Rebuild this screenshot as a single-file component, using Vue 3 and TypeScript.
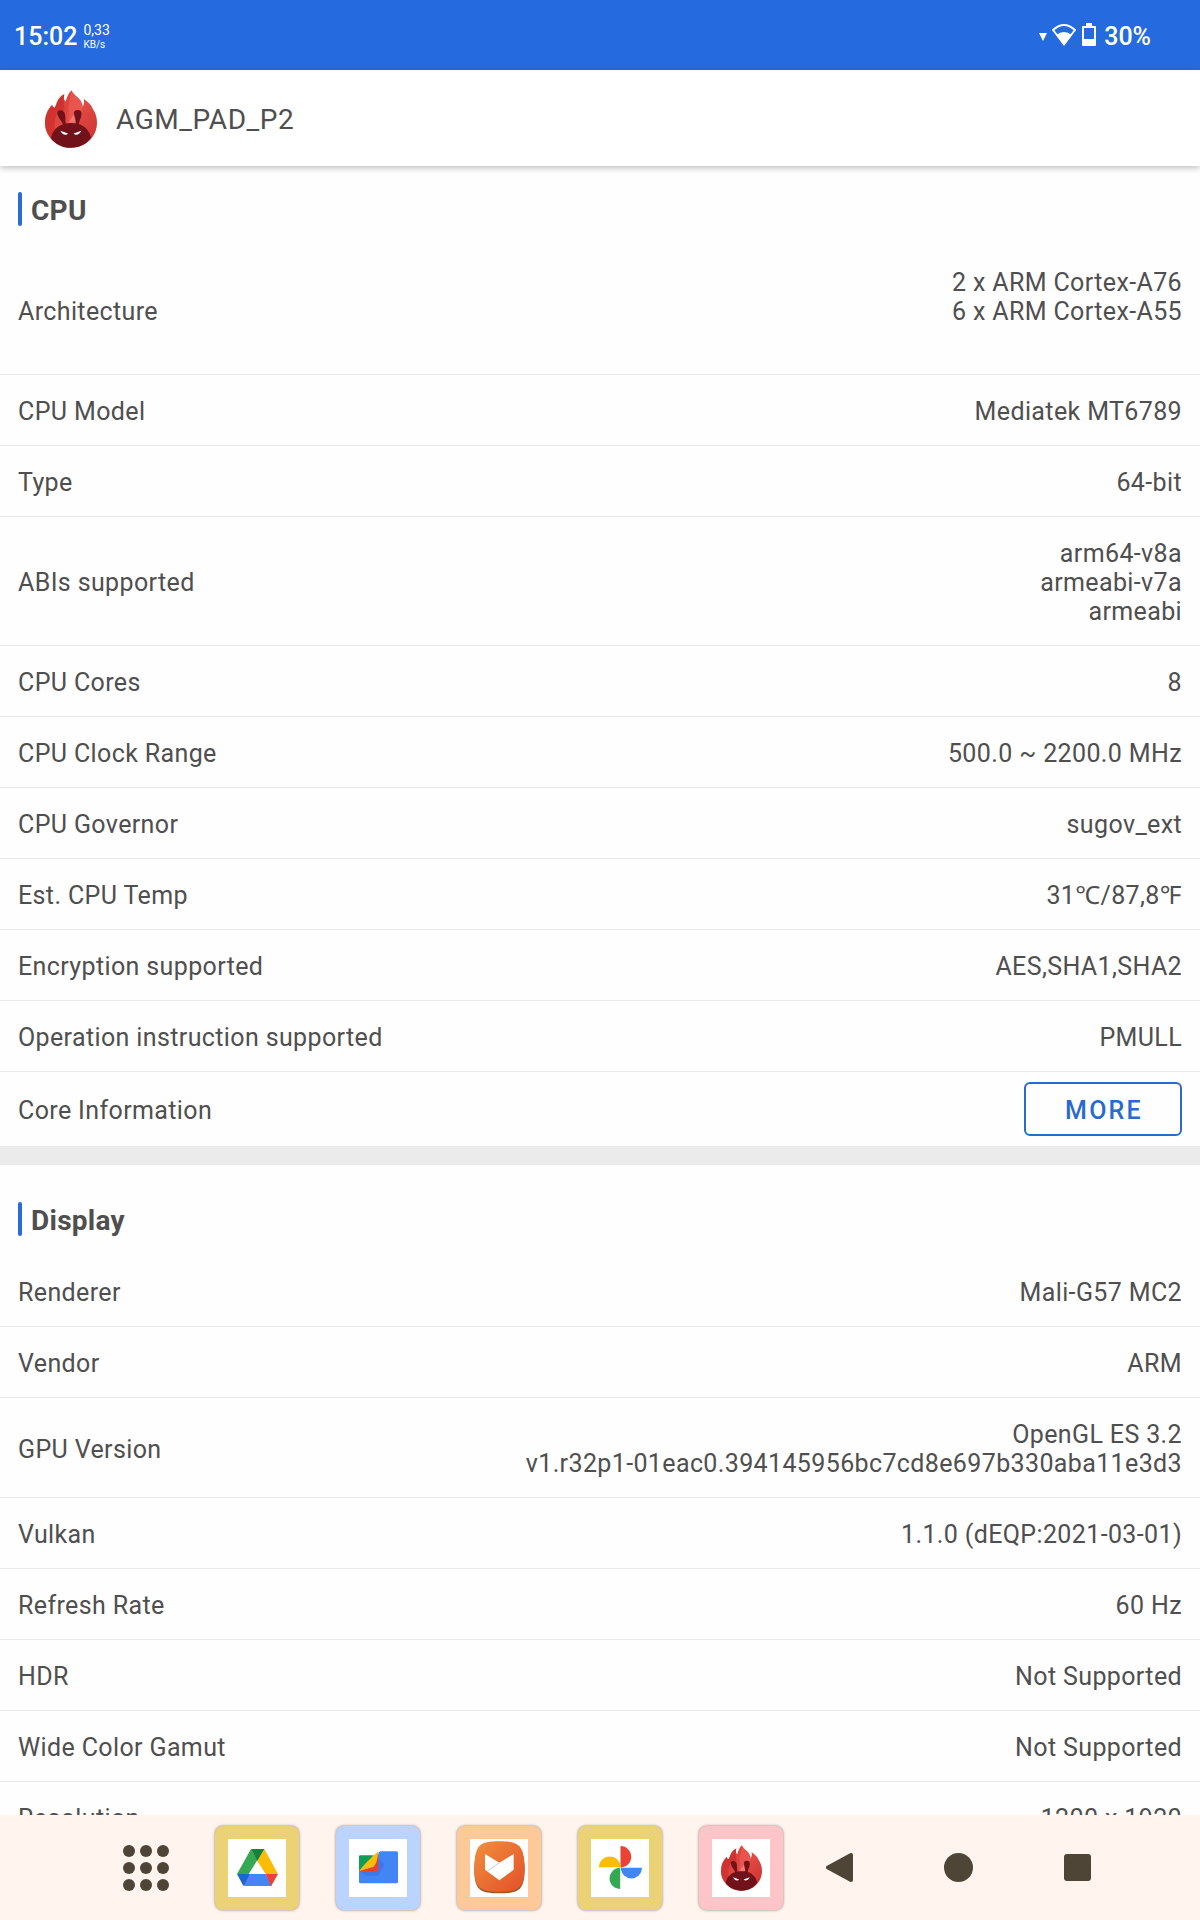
<script setup lang="ts">
interface Row {
  label: string
  value: string
}

const cpuRows: Row[] = [
  { label: 'Architecture', value: '2 x ARM Cortex-A76\n6 x ARM Cortex-A55\n\u00a0' },
  { label: 'CPU Model', value: 'Mediatek MT6789' },
  { label: 'Type', value: '64-bit' },
  { label: 'ABIs supported', value: 'arm64-v8a\narmeabi-v7a\narmeabi' },
  { label: 'CPU Cores', value: '8' },
  { label: 'CPU Clock Range', value: '500.0 ~ 2200.0 MHz' },
  { label: 'CPU Governor', value: 'sugov_ext' },
  { label: 'Est. CPU Temp', value: '31℃/87,8℉' },
  { label: 'Encryption supported', value: 'AES,SHA1,SHA2' },
  { label: 'Operation instruction supported', value: 'PMULL' },
]

const displayRows: Row[] = [
  { label: 'Renderer', value: 'Mali-G57 MC2' },
  { label: 'Vendor', value: 'ARM' },
  { label: 'GPU Version', value: 'OpenGL ES 3.2\nv1.r32p1-01eac0.394145956bc7cd8e697b330aba11e3d3' },
  { label: 'Vulkan', value: '1.1.0 (dEQP:2021-03-01)' },
  { label: 'Refresh Rate', value: '60 Hz' },
  { label: 'HDR', value: 'Not Supported' },
  { label: 'Wide Color Gamut', value: 'Not Supported' },
  { label: 'Resolution', value: '1200 x 1920' },
]
</script>

<template>
  <div class="screen">
    <svg class="defs" aria-hidden="true">
      <defs>
        <linearGradient id="flame" x1="0" y1="0" x2="1" y2="1">
          <stop offset="0" stop-color="#d8382f" />
          <stop offset="0.5" stop-color="#e24a44" />
          <stop offset="1" stop-color="#c9302c" />
        </linearGradient>
        <linearGradient id="aptoide" x1="0" y1="0" x2="1" y2="1">
          <stop offset="0" stop-color="#f18f3c" />
          <stop offset="1" stop-color="#e2502a" />
        </linearGradient>
        <symbol id="antutu" viewBox="0 0 156 173">
          <path fill="url(#flame)" d="M78 173C34 173 0 140 0 98C0 76 8 58 22 44C22 50 24 52 30 52C36 36 40 20 58 12C56 22 56 30 62 34C66 20 70 8 80 0C84 14 100 20 107 32C111 40 113 44 113 50C118 42 118 34 116 26C130 36 138 44 143 55C153 70 156 84 156 98C156 140 122 173 78 173Z" />
          <path fill="#c72a28" d="M22 44C22 50 24 52 30 52C36 36 40 20 58 12C52 34 60 48 58 62L38 64C28 84 26 110 32 132L20 145C6 132 0 116 0 98C0 76 8 58 22 44Z" opacity="0.6" />
          <path fill="#f0645c" d="M80 0C84 14 100 20 107 32C111 40 113 48 111 60L96 62L86 92L70 92C74 62 66 50 80 0Z" opacity="0.5" />
          <path fill="#f3837a" d="M86 74L94 98L70 98Z" opacity="0.8" />
          <path fill="#711119" d="M78 173C50 173 30 160 18 144C22 122 36 108 54 102C48 88 36 80 37 66C39 58 52 58 58 66C63 76 60 90 62 100Q78 97 92 100C94 88 86 74 87 66C90 57 106 57 109 66C112 80 102 90 102 102C120 108 134 122 138 143C124 162 104 173 78 173Z" />
          <path fill="#fff" d="M46 122L69 130C65 136 52 136 46 122ZM109 122L86 130C90 136 103 136 109 122Z" />
        </symbol>
      </defs>
    </svg>

    <div class="status">
      <div class="status-left">
        <span class="clock">15:02</span>
        <span class="speed"><span class="rate">0,33</span><span class="unit">KB/s</span></span>
      </div>
      <div class="status-right">
        <svg width="8" height="8" viewBox="0 0 8 8"><path fill="#fff" d="M0 0H8L4 8Z" /></svg>
        <svg class="wifi" width="26" height="23" viewBox="0 0 26 23">
          <path fill="none" stroke="#fff" stroke-width="2" stroke-linejoin="round" d="M13 21L2 7Q13 -3 24 7Z" />
          <path fill="#fff" d="M13 23L5 12Q13 6 21 12Z" />
        </svg>
        <svg class="battery" width="14" height="23" viewBox="0 0 14 23">
          <path fill="#fff" fill-rule="evenodd" d="M4 0H10V3H13Q14 3 14 4V22Q14 23 13 23H1Q0 23 0 22V4Q0 3 1 3H4ZM2 5V16H12V5Z" />
        </svg>
        <span>30%</span>
      </div>
    </div>

    <header class="appbar">
      <svg width="52" height="58"><use href="#antutu" /></svg>
      <h1>AGM_PAD_P2</h1>
    </header>

    <main class="content">
      <section class="first">
        <h2>CPU</h2>
        <dl>
          <div v-for="row in cpuRows" :key="row.label" class="row">
            <dt>{{ row.label }}</dt>
            <dd>{{ row.value }}</dd>
          </div>
          <div class="row action">
            <dt>Core Information</dt>
            <dd><button type="button" class="more">MORE</button></dd>
          </div>
        </dl>
      </section>
      <section class="second">
        <h2>Display</h2>
        <dl>
          <div v-for="row in displayRows" :key="row.label" class="row">
            <dt>{{ row.label }}</dt>
            <dd>{{ row.value }}</dd>
          </div>
        </dl>
      </section>
    </main>

    <nav class="dock">
      <button type="button" class="apps" aria-label="All apps">
        <svg width="48" height="48" viewBox="0 0 48 48" fill="#4f4537">
          <template v-for="y in 3" :key="y">
            <circle v-for="x in 3" :key="x" :cx="x * 17 - 10" :cy="y * 17 - 10" r="6" />
          </template>
        </svg>
      </button>
      <div class="tiles">
        <button type="button" class="tile gold" aria-label="Drive">
          <span class="pad">
            <svg width="41" height="37" viewBox="0 0 123 111">
              <path fill="#34a853" d="M42 0L0 75H35L61 33Z" />
              <path fill="#fbbc04" d="M82 0L123 75H86L61 36Z" />
              <path fill="#188038" d="M42 0H82L61 36Z" />
              <path fill="#4285f4" d="M35 75H86L104 111H21Z" />
              <path fill="#1967d2" d="M0 75H38L21 111Q18 109 16 105Z" />
              <path fill="#ea4335" d="M86 75H123L106 105Q104 109 102 111Z" />
            </svg>
          </span>
        </button>
        <button type="button" class="tile blue" aria-label="Files">
          <span class="pad">
            <svg width="39" height="33" viewBox="0 0 117 99">
              <path fill="#4285f4" d="M0 20H55L60 4Q62 1 66 1H112Q117 1 117 6V92Q117 97 112 97H5Q0 97 0 92Z" />
              <path fill="#3367d6" d="M58 22V61H4L20 74H58L76 40Z" opacity="0.4" />
              <path fill="#0f9d58" d="M4 13H45L0 60V17Q0 13 4 13Z" />
              <path fill="#db4437" d="M58 4V57Q58 61 54 61H0Z" />
              <path fill="#fbbc04" d="M58 1C55 24 54 36 44 47C34 51 16 54 0 61C14 42 36 20 58 1Z" />
            </svg>
          </span>
        </button>
        <button type="button" class="tile orange" aria-label="Aptoide">
          <span class="pad">
            <svg width="51" height="53" viewBox="0 0 153 159">
              <path fill="#9b5a26" d="M76 6C136 6 148 16 152 80C152 146 136 157 76 157C16 157 0 146 1 80C4 16 16 6 76 6Z" />
              <path fill="url(#aptoide)" d="M76 1C136 1 148 12 152 76C152 140 136 152 76 152C16 152 0 140 1 76C4 12 16 1 76 1Z" />
              <path fill="#fff" d="M33 39L76 65L119 39V86L76 118L33 86Z" />
              <path fill="none" stroke="#ccc" stroke-width="3" d="M39 91L76 65" />
            </svg>
          </span>
        </button>
        <button type="button" class="tile gold" aria-label="Photos">
          <span class="pad">
            <svg width="43" height="43" viewBox="0 0 130 130">
              <path fill="#ea4335" d="M65 0A32 32 0 0 1 65 65Z" />
              <path fill="#4285f4" d="M130 66A32 32 0 0 1 66 66Z" />
              <path fill="#34a853" d="M64 130A32 32 0 0 1 64 66Z" />
              <path fill="#fbbc04" d="M0 64A32 32 0 0 1 65 64Z" />
            </svg>
          </span>
        </button>
        <button type="button" class="tile pink" aria-label="AnTuTu">
          <span class="pad"><svg width="41" height="46"><use href="#antutu" /></svg></span>
        </button>
      </div>
      <div class="keys">
        <button type="button" aria-label="Back">
          <svg width="27" height="29" viewBox="0 0 27 29"><path fill="#4f4537" stroke="#4f4537" stroke-width="4" stroke-linejoin="round" d="M2 14.500L25 2V27Z" /></svg>
        </button>
        <button type="button" aria-label="Home">
          <svg width="29" height="29" viewBox="0 0 30 30"><circle cx="15" cy="15" r="15" fill="#4f4537" /></svg>
        </button>
        <button type="button" aria-label="Recents">
          <svg width="27" height="27" viewBox="0 0 27 27"><rect width="27" height="27" rx="3" fill="#4f4537" /></svg>
        </button>
      </div>
    </nav>
  </div>
</template>

<style>
body {
  margin: 0;
}
</style>

<style scoped>
.screen {
  display: flex;
  flex-direction: column;
  height: 100vh;
  overflow: hidden;
  background: #fefefe;
  color: #4f4f4f;
  font-family: Roboto, "Noto Sans", "Noto Sans CJK SC", sans-serif;
  font-size: 25px;
  line-height: 29px;
}
svg {
  display: block;
  flex: none;
}
.defs {
  position: absolute;
  width: 0;
  height: 0;
}
button {
  padding: 0;
  border: 0;
  background: none;
  font: inherit;
  color: inherit;
}
.status {
  flex: none;
  display: flex;
  justify-content: space-between;
  align-items: center;
  height: 70px;
  padding: 3px 49px 0 14px;
  box-sizing: border-box;
  background: #256bdf;
  color: #fff;
  font-weight: 500;
}
.status-left,
.status-right {
  display: flex;
  align-items: center;
}
.speed {
  display: flex;
  flex-direction: column;
  margin-left: 6px;
  font-weight: 400;
}
.rate {
  font-size: 14px;
  line-height: 16px;
}
.unit {
  font-size: 10px;
  line-height: 14px;
}
.wifi {
  margin: 0 0 4px 4px;
}
.battery {
  margin: 0 8px 4px 5px;
}
.appbar {
  position: relative;
  flex: none;
  display: flex;
  align-items: center;
  gap: 19px;
  height: 96px;
  padding: 2px 45px 0;
  box-sizing: border-box;
  background: #fff;
  box-shadow: 0 2px 6px rgba(0, 0, 0, 0.25);
}
h1 {
  margin: 0;
  padding-top: 2px;
  font-size: 28px;
  line-height: 32px;
  font-weight: 400;
  letter-spacing: 0.02em;
}
.content {
  flex: 1;
  min-height: 0;
  overflow-y: auto;
  scrollbar-width: none;
}
section {
  padding-top: 37px;
}
.first {
  padding-top: 26px;
}
.second {
  border-top: 19px solid #ebebeb;
}
h2 {
  display: flex;
  gap: 9px;
  height: 34px;
  margin: 0 18px 20px;
  font-size: 28px;
  line-height: 37px;
  font-weight: 700;
  letter-spacing: 0.01em;
}
h2::before {
  content: "";
  width: 4px;
  height: 34px;
  border-radius: 2px;
  background: #2a6adb;
}
dl,
dd {
  margin: 0;
}
.row {
  display: flex;
  justify-content: space-between;
  align-items: center;
  gap: 24px;
  padding: 22px 18px 19px;
  border-bottom: 1px solid #e9e9e9;
  letter-spacing: 0.015em;
}
dd {
  white-space: pre-line;
  text-align: right;
}
.action {
  padding: 10px 18px;
  border-bottom: 0;
}
.action dt {
  padding-top: 2px;
}
.more {
  display: block;
  width: 158px;
  height: 54px;
  padding: 2px 0 0 2px;
  border: 2px solid #2a6ad0;
  border-radius: 6px;
  color: #2a6ad0;
  font-weight: 500;
  letter-spacing: 0.09em;
}
.dock {
  flex: none;
  display: flex;
  justify-content: center;
  align-items: center;
  height: 105px;
  background: #fff5ee;
}
.apps {
  display: flex;
  justify-content: center;
  width: 130px;
  margin-right: 4px;
}
.tiles {
  display: flex;
  gap: 37px;
}
.tile {
  display: grid;
  place-items: center;
  width: 84px;
  height: 84px;
  border-radius: 8px;
  box-shadow: 0 0 3px rgba(0, 0, 0, 0.5);
}
.gold {
  background: #ecd277;
}
.blue {
  background: #bad3ff;
}
.orange {
  background: #fec998;
}
.pink {
  background: #fec5c9;
}
.pad {
  display: grid;
  place-items: center;
  width: 58px;
  height: 58px;
  background: #fff;
}
.keys {
  display: flex;
  gap: 36px;
  margin-left: 15px;
}
.keys button {
  display: grid;
  place-items: center;
  width: 83px;
}
</style>
